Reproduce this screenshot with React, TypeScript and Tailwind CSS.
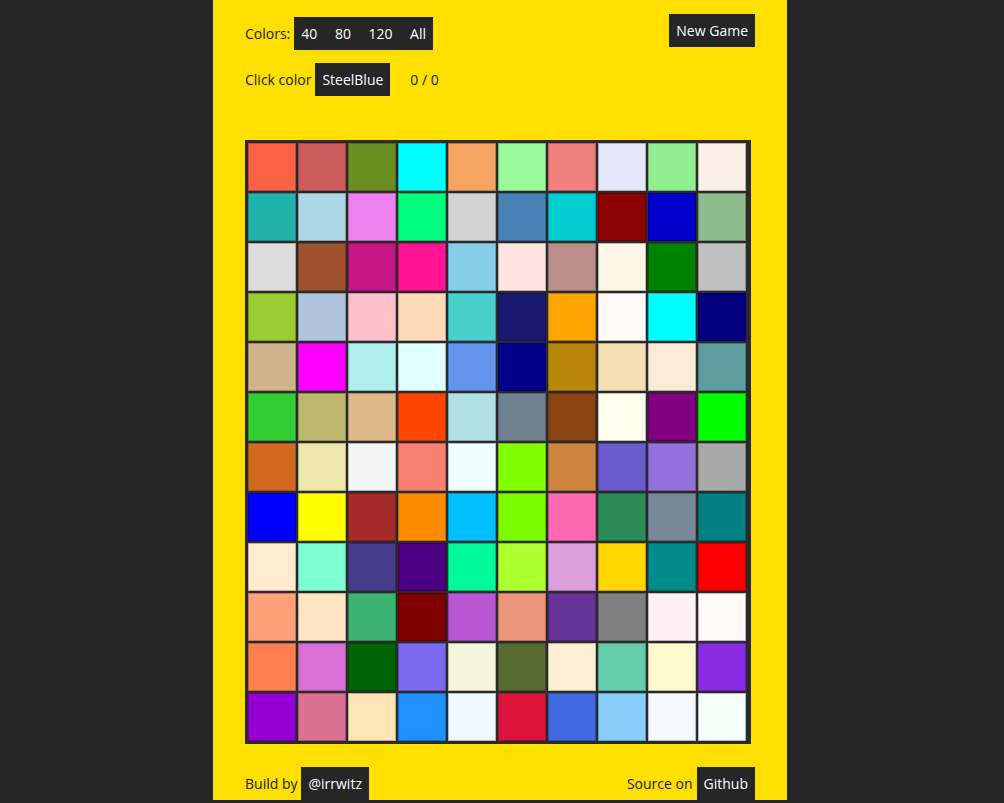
import React from 'react';

// Named colours in board order, 10 per row
const board = [
  'tomato', 'indianred', 'olivedrab', 'aqua', 'sandybrown', 'palegreen', 'lightcoral', 'lavender', 'lightgreen', 'linen',
  'lightseagreen', 'lightblue', 'violet', 'springgreen', 'lightgray', 'steelblue', 'darkturquoise', 'darkred', 'mediumblue', 'darkseagreen',
  'gainsboro', 'sienna', 'mediumvioletred', 'deeppink', 'skyblue', 'mistyrose', 'rosybrown', 'oldlace', 'green', 'silver',
  'yellowgreen', 'lightsteelblue', 'pink', 'peachpuff', 'mediumturquoise', 'midnightblue', 'orange', 'snow', 'cyan', 'navy',
  'tan', 'fuchsia', 'paleturquoise', 'lightcyan', 'cornflowerblue', 'darkblue', 'darkgoldenrod', 'wheat', 'antiquewhite', 'cadetblue',
  'limegreen', 'darkkhaki', 'burlywood', 'orangered', 'powderblue', 'slategray', 'saddlebrown', 'ivory', 'purple', 'lime',
  'chocolate', 'palegoldenrod', 'whitesmoke', 'salmon', 'azure', 'chartreuse', 'peru', 'slateblue', 'mediumpurple', 'darkgray',
  'blue', 'yellow', 'brown', 'darkorange', 'deepskyblue', 'lawngreen', 'hotpink', 'seagreen', 'lightslategray', 'teal',
  'blanchedalmond', 'aquamarine', 'darkslateblue', 'indigo', 'mediumspringgreen', 'greenyellow', 'plum', 'gold', 'darkcyan', 'red',
  'lightsalmon', 'bisque', 'mediumseagreen', 'maroon', 'mediumorchid', 'darksalmon', 'rebeccapurple', 'gray', 'lavenderblush', 'snow',
  'coral', 'orchid', 'darkgreen', 'mediumslateblue', 'beige', 'darkolivegreen', 'papayawhip', 'mediumaquamarine', 'lemonchiffon', 'blueviolet',
  'darkviolet', 'palevioletred', 'moccasin', 'dodgerblue', 'aliceblue', 'crimson', 'royalblue', 'lightskyblue', 'ghostwhite', 'mintcream',
];

function DarkButton({ children }: { children: React.ReactNode }) {
  return (
    <button className="h-[33px] px-[7px] bg-[#262626] text-white leading-none">
      {children}
    </button>
  );
}

export default function App() {
  return (
    <div
      className="min-h-[803px] bg-[#262626] text-[14px] text-[#1a1a1a]"
      style={{ fontFamily: '"Open Sans", sans-serif' }}
    >
      <div className="w-[1000px]">
        <div className="mx-auto w-[574px] h-[800px] bg-[#ffdf00] px-8 pt-[14px] flex flex-col">
          {/* Header */}
          <div className="flex justify-between items-start">
            <div className="flex flex-col gap-[13px] mt-[3px]">
              <div className="flex items-center gap-[4px]">
                <span>Colors:</span>
                <div className="flex gap-[3.6px] bg-[#262626]">
                  <DarkButton>40</DarkButton>
                  <DarkButton>80</DarkButton>
                  <DarkButton>120</DarkButton>
                  <DarkButton>All</DarkButton>
                </div>
              </div>
              <div className="flex items-center">
                <span>Click color</span>
                <span className="ml-[4px]">
                  <DarkButton>SteelBlue</DarkButton>
                </span>
                <span className="ml-[20px]">0 / 0</span>
              </div>
            </div>
            <DarkButton>New Game</DarkButton>
          </div>

          {/* Board */}
          <div className="mt-[44px] w-[506px] border-2 border-[#2a2a2a] bg-[#2a2a2a] flex flex-wrap">
            {board.map((c, i) => (
              <div
                key={i}
                className="w-12 h-12 m-px border border-black/25"
                style={{ backgroundColor: c }}
              />
            ))}
          </div>

          {/* Footer */}
          <div className="mt-auto flex justify-between items-center">
            <div className="flex items-center gap-[4px]">
              <span>Build by</span>
              <DarkButton>@irrwitz</DarkButton>
            </div>
            <div className="flex items-center gap-[4px]">
              <span>Source on</span>
              <DarkButton>Github</DarkButton>
            </div>
          </div>
        </div>
      </div>
    </div>
  );
}
